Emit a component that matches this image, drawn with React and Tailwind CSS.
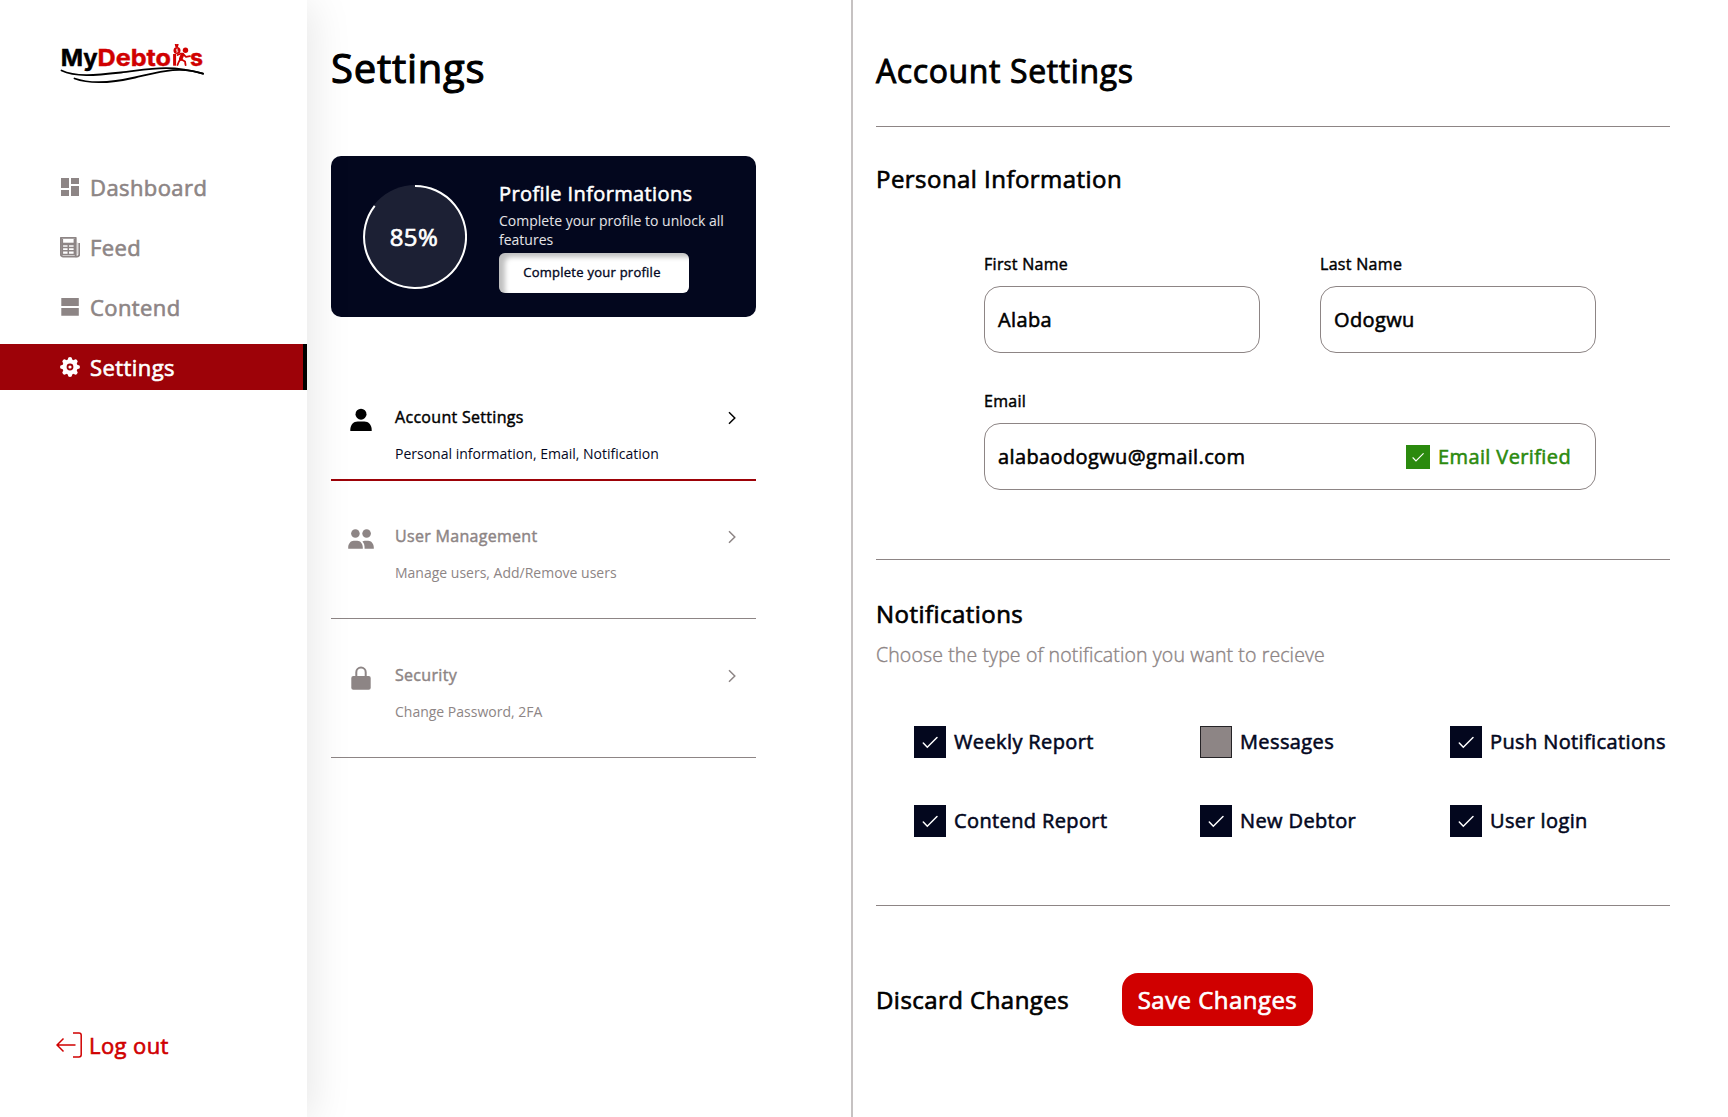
import React from "react";

function Logo() {
  return (
    <svg viewBox="0 0 150 44" className="h-11 w-[150px]" aria-label="MyDebtors">
      <g fontFamily="Inter, sans-serif" fontWeight="700" fontSize="23.5" strokeWidth=".4">
        <text x="0.7" y="21.9" textLength="37" lengthAdjust="spacingAndGlyphs" fill="#000" stroke="#000">My</text>
        <text x="37.5" y="21.9" textLength="73.5" lengthAdjust="spacingAndGlyphs" fill="#D00000" stroke="#D00000">Debto</text>
        <text x="130" y="21.9" textLength="13" lengthAdjust="spacingAndGlyphs" fill="#D00000" stroke="#D00000">s</text>
      </g>
      <g stroke="#D00000" fill="none" strokeLinecap="round" strokeLinejoin="round">
        <path d="M114.600 21.700V10" strokeWidth="3" strokeLinecap="butt" />
        <path d="M122.500 10.500l-1.800 4.500" strokeWidth="3.600" />
        <path d="M120.500 15l-1.800 3-1.200 3M121.500 15.500l3.500 2 .6 3.700M123 10l3 2.800 4-.6M121 9.500l-3.500 1.500" strokeWidth="1.800" />
      </g>
      <g fill="#D00000">
        <circle cx="125.500" cy="6.200" r="2.7" />
        <circle cx="117" cy="6.600" r="3.500" />
        <path d="M114.500 -1l2.200 1.200 2.200-1.200-.9 4h-2.600z" />
      </g>
      <path d="M118 5.200h-1.600v1.400h1.300V8h-1.700" stroke="#fff" strokeWidth=".7" fill="none" />
      <g stroke="#000" fill="none" strokeLinecap="round">
        <path d="M1.500 26.500C15 33 34 31.500 61 28.500S109 20 143 29.700" strokeWidth="1.800" />
        <path d="M14.500 34.500C31 40.500 51 39 75 33.500S119 21.500 143 29.700" strokeWidth="1.800" />
      </g>
    </svg>
  );
}

function DashboardIcon() {
  return (
    <svg viewBox="0 0 20 20" className="size-5" fill="currentColor">
      <path d="M1 1h8v10H1zM11 1h8v6h-8zM1 13h8v6H1zM11 9h8v10h-8z" />
    </svg>
  );
}

function FeedIcon() {
  return (
    <svg viewBox="0 0 20 21" className="h-[21px] w-5" fill="none" stroke="currentColor">
      <path d="M.9 .9h14.800v18.700H3.200a2.300 2.300 0 0 1-2.300-2.300z" strokeWidth="1.900" strokeLinejoin="round" />
      <path d="M15.700 19.600H17a2.300 2.300 0 0 0 2.300-2.300V6" strokeWidth="1.900" />
      <path d="M17.400 5.500v12" strokeWidth=".7" strokeOpacity=".5" />
      <path d="M1.500 7H15.500" strokeWidth="2.600" />
      <path d="M2 10.500h13M2 13.700h13M2 17.600h13M8.300 7v10.500" strokeWidth="1.500" />
      <path d="M2.300 2v16M14.400 2v16" strokeWidth="1.600" />
    </svg>
  );
}

function ContendIcon() {
  return (
    <svg viewBox="0 0 20 20" className="size-5" fill="currentColor">
      <path d="M1.300 1h17.500v8H1.300zM1.300 11h17.500v7.700H1.300z" />
    </svg>
  );
}

function GearIcon() {
  return (
    <svg viewBox="0 0 20 20" className="size-5">
      <g fill="currentColor">
        <circle cx="10" cy="10" r="7.700" />
        <g stroke="currentColor" strokeWidth="4.200" strokeLinejoin="round" strokeLinecap="round">
          <path d="M10 2.100v15.800M2.100 10h15.800M4.500 4.500l11 11M15.500 4.500l-11 11" />
        </g>
      </g>
      <circle cx="10" cy="10" r="2.500" fill="none" stroke="#9D0208" strokeWidth="1.800" />
    </svg>
  );
}

function Chevron() {
  return (
    <svg viewBox="0 0 10 14" className="h-3.5 w-2.5" fill="none" stroke="currentColor" strokeWidth="1.500">
      <path d="M2 1.200l5.800 5.800L2 12.800" />
    </svg>
  );
}

function Check({ className }) {
  return (
    <svg viewBox="0 0 32 32" className={className} fill="none" stroke="#fff" strokeWidth="1.500" strokeLinecap="round">
      <path d="M9.300 17l4 4.200L23 11.500" />
    </svg>
  );
}

const PersonIcon = () => (
  <svg viewBox="0 0 26 26" className="size-[26px]" fill="currentColor">
    <circle cx="13" cy="7.200" r="5.500" />
    <path d="M2.300 24v-1.200c0-4.800 3.200-8.300 7.400-8.300h6.600c4.200 0 7.400 3.500 7.400 8.300V24z" />
  </svg>
);

const PeopleIcon = () => (
  <svg viewBox="0 0 26 26" className="size-[26px]" fill="currentColor">
    <circle cx="7.400" cy="7.500" r="4.300" />
    <circle cx="18.600" cy="7.500" r="4.300" />
    <path d="M.2 22.800v-1.300c0-4 2.600-6.800 5.500-6.800h3.600c3 0 5.500 2.800 5.500 6.800v1.300zM16.600 22.800c.1-3.200-.4-5.500-2.200-7.300.8-.6 1.600-.8 2.400-.8h3.400c3 0 5.600 2.800 5.600 6.800v1.300z" />
  </svg>
);

const LockIcon = () => (
  <svg viewBox="0 0 26 26" className="size-[26px]">
    <path d="M8.300 12V7.300a4.700 4.700 0 0 1 9.400 0V12" fill="none" stroke="currentColor" strokeWidth="2" />
    <rect x="3.300" y="11" width="19.400" height="13.800" rx="2" fill="currentColor" />
  </svg>
);

// Open Sans has no 500 weight here, so medium text is regular with a hairline stroke.
const medium = "tracking-[0.019em] [-webkit-text-stroke:0.028em]";

const nav = [
  { label: "Dashboard", Icon: DashboardIcon },
  { label: "Feed", Icon: FeedIcon },
  { label: "Contend", Icon: ContendIcon },
  { label: "Settings", Icon: GearIcon, active: true },
];

function Sidebar() {
  return (
    <aside className="z-10 flex w-[307px] shrink-0 flex-col bg-white shadow-[4px_4px_40px_rgba(0,0,0,0.1)]">
      <div className="h-[164px] pt-11 pl-[60px]">
        <Logo />
      </div>
      <nav className="flex flex-col gap-3.5">
        {nav.map(({ label, Icon, active }) => (
          <a
            key={label}
            className={
              "flex h-[46px] items-center gap-2.5 border-r-4 pl-[60px] text-[22px] leading-[30px] " +
              (active ? "border-black bg-[#9D0208] text-white" : "border-transparent text-[#8D8585]")
            }
          >
            <Icon />
            <span className={medium}>{label}</span>
          </a>
        ))}
      </nav>
      <a className="mt-auto mb-[57px] flex items-center gap-[7px] pl-14 text-[22px] leading-[30px] text-[#D00000]">
        <svg viewBox="0 0 26 26" className="h-[26px] w-[26px]" fill="none" stroke="currentColor" strokeWidth="1.500">
          <path d="M17 1h6a2.200 2.200 0 0 1 2.200 2.200v19.600A2.200 2.200 0 0 1 23 25h-6M19.500 13H1M7.500 6.500L1 13l6.500 6.500" />
        </svg>
        <span className={medium}>Log out</span>
      </a>
    </aside>
  );
}

function ProfileCard() {
  return (
    <section className="flex h-[161px] w-[425px] rounded-[10px] bg-[#03071E] pl-8 text-white">
      <div className="relative mt-[28.5px] size-[104px] shrink-0">
        <svg viewBox="0 0 104 104" className="size-full">
          <circle cx="52" cy="52" r="52" fill="#fff" fillOpacity="0.1" />
          <path d="M52 1A51 51 0 1 1 11.700 20.800" fill="none" stroke="#fff" strokeWidth="2" />
        </svg>
        <span className={"absolute inset-0 flex items-center justify-center pr-0.5 text-2xl " + medium}>85%</span>
      </div>
      <div className="ml-8 w-[240px] pt-6">
        <h2 className={"text-xl leading-[27px] " + medium}>Profile Informations</h2>
        <p className="mt-1 text-sm leading-[19px] text-white/90">Complete your profile to unlock all features</p>
        <button className={"mt-1 h-10 w-[190px] rounded-md bg-white pr-1 pb-px text-[13px] text-[#03071E] shadow-[inset_6px_4px_5px_rgba(0,0,0,0.25)] " + medium}>
          Complete your profile
        </button>
      </div>
    </section>
  );
}

const sections = [
  { title: "Account Settings", text: "Personal information, Email, Notification", Icon: PersonIcon, active: true },
  { title: "User Management", text: "Manage users, Add/Remove users", Icon: PeopleIcon },
  { title: "Security", text: "Change Password, 2FA", Icon: LockIcon },
];

function SettingsMenu() {
  return (
    <section className="flex w-[544px] shrink-0 flex-col pl-6">
      <h1 className={"mt-[41px] text-[40px] leading-[54px] " + medium}>Settings</h1>
      <div className="mt-[61px]">
        <ProfileCard />
      </div>
      <ul className="mt-[45px] w-[425px]">
        {sections.map(({ title, text, Icon, active }) => (
          <li
            key={title}
            className={
              "flex pt-11 pl-[17px] " +
              (active
                ? "h-[119px] border-b-2 border-[#9D0208] text-black"
                : "h-[138px] border-b border-[#8D8585] text-[#8D8585] last:h-[139px] last:pt-[45px]")
            }
          >
            <span className="mt-[0.5px]">
              <Icon />
            </span>
            <div className="ml-[21px] flex-1">
              <h3 className={"text-base leading-[22px] " + medium}>{title}</h3>
              <p className={active ? "mt-4 text-sm leading-[19px] text-[#03071E]" : "mt-4 text-sm leading-[19px]"}>{text}</p>
            </div>
            <span className="mt-[5px] mr-[19px]">
              <Chevron />
            </span>
          </li>
        ))}
      </ul>
    </section>
  );
}

function Field({ label, value, wide, children }) {
  return (
    <label className={wide ? "col-span-2 block" : "block"}>
      <span className={"block text-base leading-[22px] " + medium}>{label}</span>
      <span className={"mt-[11px] flex h-[67px] items-center rounded-2xl border border-[#8D8585] pr-6 pl-[13px] text-xl " + medium}>
        {value}
        {children}
      </span>
    </label>
  );
}

const notifications = [
  ["Weekly Report", true],
  ["Messages", false],
  ["Push Notifications", true],
  ["Contend Report", true],
  ["New Debtor", true],
  ["User login", true],
];

function AccountSettings() {
  return (
    <main className="flex flex-1 flex-col border-l-2 border-[#C6C2C2] pr-[58px] pl-[23px]">
      <h2 className={"mt-[49px] text-[32px] leading-[43px] " + medium}>Account Settings</h2>
      <hr className="mt-[34px] border-[#8D8585]" />

      <h3 className={"mt-[35px] text-2xl leading-[33px] " + medium}>Personal Information</h3>
      <div className="mt-[58px] ml-[108px] grid w-[612px] grid-cols-[276px_276px] gap-x-[60px] gap-y-[37px]">
        <Field label="First Name" value="Alaba" />
        <Field label="Last Name" value="Odogwu" />
        <Field label="Email" value="alabaodogwu@gmail.com" wide>
          <span className="ml-auto flex items-center gap-2 text-[#2B8A0E]">
            <span className="size-6 bg-[#2B8A0E]">
              <Check className="size-6" />
            </span>
            Email Verified
          </span>
        </Field>
      </div>

      <hr className="mt-[69px] border-[#8D8585]" />
      <h3 className={"mt-[37px] text-2xl leading-[33px] " + medium}>Notifications</h3>
      <p className="mt-[11px] text-[19.5px] leading-[27px] font-light tracking-[0.006em] text-[#8D8585] [-webkit-text-stroke:0.02em]">
        Choose the type of notification you want to recieve
      </p>
      <div className="mt-[58px] ml-[38px] grid grid-cols-[286px_250px_auto] gap-y-[47px]">
        {notifications.map(([label, on]) => (
          <div key={label} className={"flex h-8 items-center gap-2 text-xl whitespace-nowrap text-[#03071E] " + medium}>
            <span className={on ? "size-8 shrink-0 bg-[#03071E]" : "size-8 shrink-0 border border-[#252326] bg-[#8D8585]"}>
              {on && <Check className="size-8" />}
            </span>
            {label}
          </div>
        ))}
      </div>

      <hr className="mt-[68px] border-[#8D8585]" />
      <div className="mt-[67px] flex items-center text-2xl">
        <button className={"w-[246px] text-left " + medium}>Discard Changes</button>
        <button className={"h-[53px] w-[191px] rounded-2xl bg-[#D00000] text-white " + medium}>Save Changes</button>
      </div>
    </main>
  );
}

export default function App() {
  return (
    <div className="flex h-[1117px] w-[1728px] overflow-hidden bg-white font-['Open_Sans',sans-serif] text-black">
      <Sidebar />
      <SettingsMenu />
      <AccountSettings />
    </div>
  );
}
